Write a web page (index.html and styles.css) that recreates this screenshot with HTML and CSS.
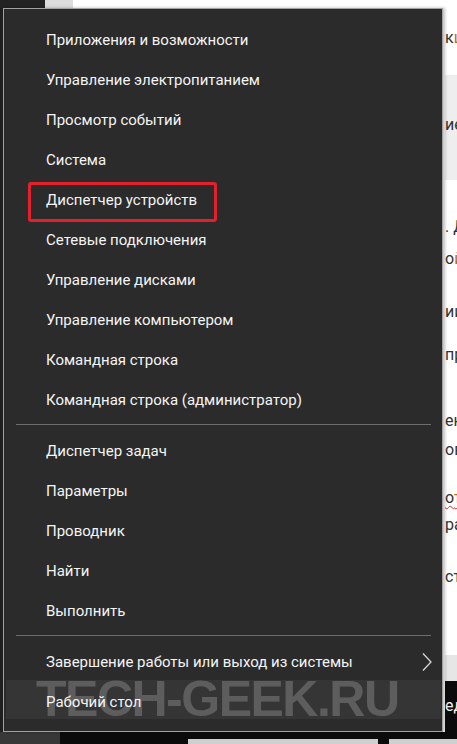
FILE: index.html
```html
<!DOCTYPE html>
<html lang="ru">
<head>
<meta charset="utf-8">
<title>Меню Win+X</title>
<link rel="stylesheet" href="styles.css">
</head>
<body>
<div class="screen">
  <div class="top-strip">
    <div class="top-dark"></div>
    <div class="top-tex"></div>
    <div class="top-white"></div>
  </div>
  <div class="left-strip"></div>

  <nav class="menu">
    <ul class="group">
      <li class="item">Приложения и возможности</li>
      <li class="item">Управление электропитанием</li>
      <li class="item">Просмотр событий</li>
      <li class="item">Система</li>
      <li class="item item-marked">Диспетчер устройств<span class="mark"></span></li>
      <li class="item">Сетевые подключения</li>
      <li class="item">Управление дисками</li>
      <li class="item">Управление компьютером</li>
      <li class="item">Командная строка</li>
      <li class="item">Командная строка (администратор)</li>
    </ul>
    <div class="sep"></div>
    <ul class="group">
      <li class="item">Диспетчер задач</li>
      <li class="item">Параметры</li>
      <li class="item">Проводник</li>
      <li class="item">Найти</li>
      <li class="item">Выполнить</li>
    </ul>
    <div class="sep"></div>
    <ul class="group">
      <li class="item item-sub">Завершение работы или выход из системы
        <svg class="chev" width="10" height="20" viewBox="0 0 10 20"><polyline points="1,1.5 9,10 1,18.5" fill="none" stroke="#d8d8d8" stroke-width="1.3"/></svg>
      </li>
      <li class="item">Рабочий стол</li>
    </ul>
    <div class="watermark" aria-hidden="true">
      <div class="wm-band"></div>
      <div class="wm-text">TECH-GEEK.RU</div>
    </div>
  </nav>

  <div class="right-strip">
    <div class="rs-white1"><div class="frag m28">к<span class="or">ш</span></div></div>
    <div class="rs-grey"><div class="frag m40">ие</div></div>
    <div class="rs-white2">
      <div class="frag m37">. Д</div>
      <div class="frag m12">о<span class="or">й</span></div>
      <div class="frag m33">ии</div>
      <div class="frag m23">пр</div>
      <div class="frag m46">ен</div>
      <div class="frag m9">ов</div>
      <div class="frag m28"><span class="wavy">о<span class="or">т</span></span></div>
      <div class="frag m7">ра</div>
      <div class="frag m32">ст</div>
    </div>
    <div class="rs-tex"></div>
    <div class="rs-black"><div class="frag frag-light m15">еда</div></div>
  </div>

  <div class="bottom-strip">
    <div class="bs-noise"></div>
    <div class="bs-black"></div>
    <div class="bs-bar"></div>
    <div class="bs-black"></div>
    <div class="bs-bar"></div>
  </div>
</div>
</body>
</html>
```
FILE: styles.css
```css
* { box-sizing: border-box; }
html, body { margin: 0; padding: 0; }
body {
  background: #ffffff;
  font-family: Roboto, "Noto Sans", "DejaVu Sans", sans-serif;
}
.screen {
  width: 457px;
  height: 744px;
  display: grid;
  grid-template-columns: 3px 440px 14px;
  grid-template-rows: 8px 724px 12px;
  overflow: hidden;
  background: #ffffff;
}

/* top strip */
.top-strip {
  grid-column: 1 / 3;
  grid-row: 1;
  display: flex;
}
.top-dark { width: 45px; background: #232323; }
.top-tex { width: 28px; background: #dcdcdc; }
.top-white { flex: 1; background: #ffffff; }

.left-strip {
  grid-column: 1;
  grid-row: 2;
  background: #1f1f1f;
}

/* menu */
.menu {
  grid-column: 2;
  grid-row: 2;
  position: relative;
  z-index: 1;
  background: #2b2b2b;
  border: 1px solid #a2a2a2;
  padding-top: 11px;
  box-shadow: 2px 0 3px rgba(0, 0, 0, 0.25);
}
.group {
  list-style: none;
  margin: 0;
  padding: 0;
}
.item {
  position: relative;
  height: 40px;
  line-height: 40px;
  padding-left: 42px;
  color: #f4f4f4;
  font-size: 15px;
  white-space: nowrap;
}
.item-sub {
  display: flex;
  align-items: center;
  justify-content: space-between;
  padding-right: 10px;
}
.chev { display: block; }
.mark {
  position: absolute;
  left: 24px;
  top: 2px;
  width: 189px;
  height: 40px;
  border: 3px solid #e3202b;
  border-radius: 3px;
}
.sep {
  height: 1px;
  background: #6e6e6e;
  margin: 4px 11px 6px 12px;
}

/* watermark overlay */
.watermark {
  position: absolute;
  left: 0;
  top: 0;
  width: 100%;
  height: 100%;
  pointer-events: none;
}
.wm-band {
  position: absolute;
  left: 2px;
  right: 1px;
  top: 671px;
  height: 39px;
  background: rgba(255, 255, 255, 0.05);
}
.wm-text {
  position: absolute;
  left: 32px;
  top: 665px;
  font-family: "Liberation Sans", Arial, sans-serif;
  font-weight: 700;
  font-size: 50px;
  line-height: 50px;
  letter-spacing: -1.5px;
  color: rgba(255, 255, 255, 0.2);
  white-space: nowrap;
}

/* right strip of the page behind the menu */
.right-strip {
  grid-column: 3;
  grid-row: 1 / 3;
  display: flex;
  flex-direction: column;
  overflow: hidden;
  padding-left: 2px;
}
.rs-white1 { height: 75px; background: #ffffff; }
.rs-grey { height: 105px; background: #eeeeee; }
.rs-white2 { height: 475px; background: #ffffff; }
.rs-tex { height: 26px; background: #e6e6e6; }
.rs-black { height: 51px; background: #0b0b0b; }
.frag {
  height: 20px;
  line-height: 20px;
  font-size: 16px;
  color: #333333;
  white-space: nowrap;
}
.frag-light { color: #f0f0f0; }
.or { color: #c0651f; }
.wavy {
  text-decoration: underline wavy #d23030;
  text-decoration-thickness: 1px;
  text-underline-offset: 2px;
}
.m7 { margin-top: 7px; }
.m9 { margin-top: 9px; }
.m12 { margin-top: 12px; }
.m15 { margin-top: 15px; }
.m23 { margin-top: 23px; }
.m28 { margin-top: 28px; }
.m32 { margin-top: 32px; }
.m33 { margin-top: 33px; }
.m37 { margin-top: 37px; }
.m40 { margin-top: 40px; }
.m46 { margin-top: 46px; }

/* bottom strip */
.bottom-strip {
  grid-column: 1 / 4;
  grid-row: 3;
  display: grid;
  grid-template-columns: 60px 128px 190px 11px 68px;
  background: #0b0b0b;
}
.bs-noise { background: #383838; }
.bs-black { background: #0b0b0b; }
.bs-bar { background: linear-gradient(to bottom, #0b0b0b 7px, #cfcfcf 7px); }
```
